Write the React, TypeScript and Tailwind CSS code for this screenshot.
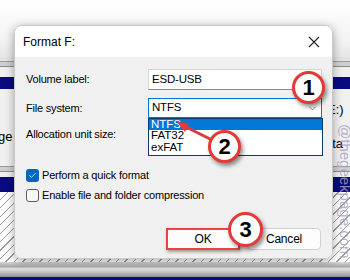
import { Check, ChevronDown } from "lucide-react"

function Badge({ n, cls }: { n: string; cls: string }) {
  return (
    <div className={`absolute flex items-center justify-center rounded-full bg-white border-[3px] border-[#e53935] shadow-[2px_3px_4px_rgba(0,0,0,0.45)] text-[22px] font-bold text-black ${cls}`}>
      {n}
    </div>
  )
}

function Lines() {
  return (
    <div className="flex flex-col">
      <div className="h-[4px] bg-[#e2e2e2]" />
      <div className="h-[1px] bg-[#9a9a9a]" />
      <div className="h-[4px] bg-[#cfcfcf]" />
      <div className="h-[1px] bg-[#8c8c8c]" />
      <div className="h-[10px] bg-[#efefef]" />
    </div>
  )
}

export default function App() {
  return (
    <div className="relative w-[350px] h-[280px] overflow-hidden bg-white text-black" style={{ fontFamily: '"Liberation Sans", Arial, sans-serif' }}>
      {/* desktop window behind */}
      <div className="flex flex-col h-full">
        <div className="h-[57px] bg-[linear-gradient(180deg,#ffffff,#f3f3f3_70%,#e6e6e6)]" />
        <Lines />
        <div className="h-[12px] bg-[#0a0a80]" />
        <div className="h-[71px] bg-[#f0f0f0] flex justify-between text-[13px]">
          <div className="pt-[38px] -ml-[2px]">ge</div>
          <div className="flex flex-col pt-[11px] gap-[14px] w-[20px]">
            <span className="-ml-[3px]">E:)</span>
            <span className="-ml-[5px]">ata</span>
          </div>
        </div>
        <div className="h-[6px] bg-[#f0f0f0]" />
        <div className="flex flex-col">
          <div className="h-[1px] bg-[#9a9a9a]" />
          <div className="h-[4px] bg-[#cfcfcf]" />
          <div className="h-[1px] bg-[#8c8c8c]" />
          <div className="h-[5px] bg-[#efefef]" />
        </div>
        <div className="h-[15px] bg-[#0a0a80]" />
        <div className="h-[70px] bg-[repeating-linear-gradient(135deg,#ffffff_0,#ffffff_5px,#9c9c9c_5px,#9c9c9c_6px)]" />
        <div className="h-[15px] bg-[linear-gradient(180deg,#d8d8d8,#a9a9a9_30%,#e0e0e0_45%,#bdbdbd_70%,#8f8f8f)]" />
        <div className="flex-1 bg-[#0a0a80]" />
      </div>

      {/* Format dialog */}
      <div className="absolute left-[14px] top-[25px] w-[319px] h-[234px] flex flex-col rounded-[8px] overflow-hidden border border-[#c8c8c8] shadow-[0_2px_10px_rgba(0,0,0,0.35)]">
        <div className="h-[31px] bg-white flex items-center justify-between pl-[8px] pr-[10px]">
          <span className="text-[12px]">Format F:</span>
          <svg width="12" height="12" viewBox="0 0 12 12" className="mr-[2px]">
            <path d="M1 1 L11 11 M11 1 L1 11" stroke="#222" strokeWidth="1.1" />
          </svg>
        </div>
        <div className="relative flex-1 bg-[#f0f0f0] flex flex-col text-[11px] tracking-[-0.2px]">
          <div className="mt-[12px] flex items-center h-[21px]">
            <span className="w-[133px] pl-[11px]">Volume label:</span>
            <div className="w-[174px] h-full bg-white border border-[#d6d6d6] border-b-[#8a8a8a] flex items-center pl-[3px] text-[11.5px]">ESD-USB</div>
          </div>
          <div className="mt-[8px] flex items-center h-[20px]">
            <span className="w-[133px] pl-[11px]">File system:</span>
            <div className="w-[174px] h-full bg-white border border-[#0078d7] flex items-center justify-between pl-[3px] pr-[3px] text-[11.5px]">
              <span>NTFS</span>
              <ChevronDown size={11} strokeWidth={1.3} color="#555" />
            </div>
          </div>
          <div className="mt-[6px] flex items-center h-[20px]">
            <span className="w-[133px] pl-[11px]">Allocation unit size:</span>
            <div className="w-[174px] h-full bg-white border border-[#bdbdbd]" />
          </div>
          <div className="mt-[25px] flex items-center h-[13px] pl-[11px]">
            <div className="w-[13px] h-[13px] rounded-[3px] bg-[#0067c0] flex items-center justify-center">
              <Check size={9} strokeWidth={2} color="white" />
            </div>
            <span className="ml-[3px]">Perform a quick format</span>
          </div>
          <div className="mt-[7px] flex items-center h-[13px] pl-[11px]">
            <div className="w-[13px] h-[13px] rounded-[3px] bg-[#f7f7f7] border border-[#5c5c5c]" />
            <span className="ml-[3px]">Enable file and folder compression</span>
          </div>
          <div className="mt-[26px] flex justify-end gap-[7px] pr-[11px]">
            <div className="w-[74px] h-[22px] bg-[#fdfdfd] border-2 border-[#e8453c] shadow-[1px_2px_3px_rgba(0,0,0,0.35)] flex items-center justify-center text-[12px]">OK</div>
            <div className="w-[74px] h-[22px] bg-[#fdfdfd] border border-[#d0d0d0] rounded-[4px] flex items-center justify-center text-[12px]">Cancel</div>
          </div>

          {/* open dropdown list */}
          <div className="absolute left-[133px] top-[61px] w-[175px] h-[38px] bg-white border border-[#0b3a6e] flex flex-col text-[11.5px] tracking-normal">
            <div className="h-[11px] bg-[#0078d7] text-white flex items-center pl-[2px]">NTFS</div>
            <div className="h-[12px] flex items-center pl-[2px]">FAT32</div>
            <div className="h-[12px] flex items-center pl-[2px]">exFAT</div>
          </div>
        </div>
      </div>

      {/* arrow to NTFS */}
      <svg className="absolute left-0 top-0" width="350" height="280">
        <line x1="212" y1="140" x2="186" y2="127" stroke="#e53935" strokeWidth="3" />
        <polygon points="177,122 189,123 185,132" fill="#e53935" />
      </svg>

      <Badge n="1" cls="left-[292px] top-[71px] w-[33px] h-[33px]" />
      <Badge n="2" cls="left-[208px] top-[130px] w-[33px] h-[33px]" />
      <Badge n="3" cls="left-[228px] top-[212px] w-[35px] h-[35px]" />

      {/* watermark */}
      <div className="absolute left-[333px] top-[124px] text-[15px] text-[#a79fbd] opacity-80 [writing-mode:vertical-rl]">@thegeekpage.com</div>
    </div>
  )
}
